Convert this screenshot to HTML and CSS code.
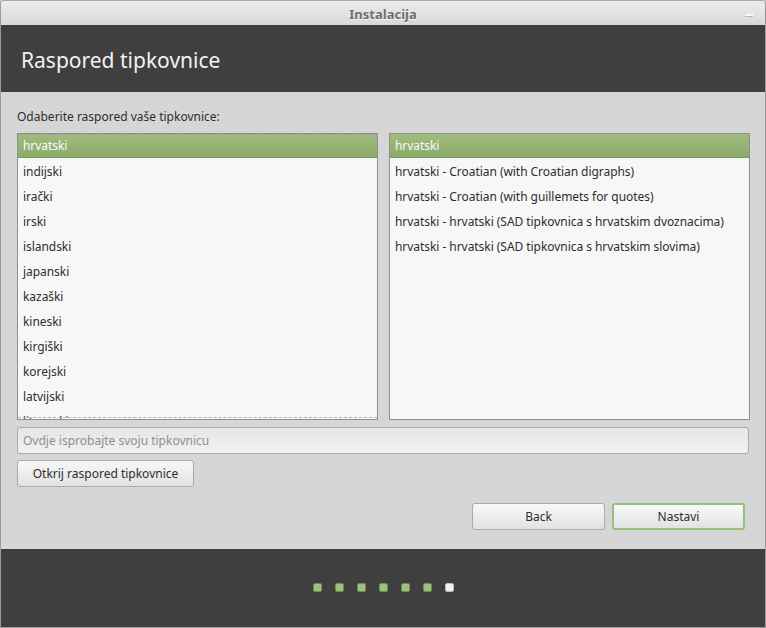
FILE: index.html
```html
<!DOCTYPE html>
<html lang="hr">
<head>
<meta charset="utf-8">
<link rel="stylesheet" href="styles.css">
</head>
<body>
<div class="window">
  <div class="titlebar">
    <span class="title">Instalacija</span>
    <span class="minimize"></span>
  </div>
  <div class="header"><h1>Raspored tipkovnice</h1></div>
  <div class="content">
    <div class="label">Odaberite raspored vaše tipkovnice:</div>
    <div class="lists">
      <div class="list">
        <div class="focus"></div>
        <div class="row selected">hrvatski</div>
        <div class="row">indijski</div>
        <div class="row">irački</div>
        <div class="row">irski</div>
        <div class="row">islandski</div>
        <div class="row">japanski</div>
        <div class="row">kazaški</div>
        <div class="row">kineski</div>
        <div class="row">kirgiški</div>
        <div class="row">korejski</div>
        <div class="row">latvijski</div>
        <div class="row">litvanski</div>
      </div>
      <div class="list">
        <div class="row selected">hrvatski</div>
        <div class="row">hrvatski - Croatian (with Croatian digraphs)</div>
        <div class="row">hrvatski - Croatian (with guillemets for quotes)</div>
        <div class="row">hrvatski - hrvatski (SAD tipkovnica s hrvatskim dvoznacima)</div>
        <div class="row">hrvatski - hrvatski (SAD tipkovnica s hrvatskim slovima)</div>
      </div>
    </div>
    <div class="input">Ovdje isprobajte svoju tipkovnicu</div>
    <div class="detect-row"><div class="btn detect">Otkrij raspored tipkovnice</div></div>
    <div class="actions">
      <div class="btn nav">Back</div>
      <div class="btn nav primary">Nastavi</div>
    </div>
  </div>
  <div class="footer">
    <div class="dots">
      <span class="dot"></span><span class="dot"></span><span class="dot"></span><span class="dot"></span><span class="dot"></span><span class="dot"></span><span class="dot current"></span>
    </div>
  </div>
</div>
</body>
</html>
```
FILE: styles.css
```css
* { box-sizing: border-box; }
html, body { margin: 0; padding: 0; }
body {
  width: 766px;
  height: 628px;
  font-family: "Noto Sans", "Open Sans", sans-serif;
  font-size: 12px;
  color: #2e2e2e;
  background: #cfcfcf;
}
.window {
  width: 766px;
  height: 628px;
  border: 1px solid #9a9a9a;
  border-top-color: #a8a8a8;
  border-radius: 4px 4px 0 0;
  display: flex;
  flex-direction: column;
  overflow: hidden;
}
.titlebar {
  height: 24px;
  flex: none;
  background: linear-gradient(#ececec, #d9d9d9);
  display: flex;
  align-items: center;
  justify-content: center;
  position: relative;
  padding-top: 2px;
}
.title {
  font-weight: bold;
  color: #6f6f6f;
  font-size: 13px;
  text-shadow: 0 1px 0 #f4f4f4;
}
.minimize {
  position: absolute;
  right: 12px;
  top: 13px;
  width: 8px;
  height: 3px;
  background: #f8f8f8;
  border: 1px solid #b8b8b8;
  border-width: 0 0 1px 0;
}
.header {
  height: 67px;
  flex: none;
  background: #3f3f3f;
  display: flex;
  align-items: center;
  padding-left: 20px;
}
.header h1 {
  margin: 0;
  font-weight: normal;
  font-size: 21px;
  color: #f2f2f2;
  padding-top: 2px;
}
.content {
  flex: 1;
  background: #d6d6d6;
  padding: 16px 16px 0 16px;
  display: flex;
  flex-direction: column;
}
.label {
  height: 17px;
  line-height: 17px;
  color: #2e2e2e;
  margin-bottom: 8px;
}
.lists {
  display: grid;
  grid-template-columns: 361px 361px;
  column-gap: 11px;
}
.list {
  height: 287px;
  background: #f7f7f7;
  border: 1px solid #8f8f8f;
  overflow: hidden;
  position: relative;
}
.focus {
  position: absolute;
  left: 0;
  right: 0;
  top: 0;
  bottom: 1px;
  border-top: 1px dashed #9d9d9d;
  border-bottom: 1px dashed #b4b4b4;
  pointer-events: none;
  z-index: 2;
}
.row {
  height: 25px;
  line-height: 25px;
  padding-left: 5px;
  color: #2e2e2e;
  white-space: nowrap;
  letter-spacing: -0.05px;
}
.row.selected {
  height: 24px;
  line-height: 24px;
  background: linear-gradient(#9fbe7e, #8cab6b);
  color: #fafafa;
  border-bottom: 1px solid #7c9a5d;
  margin-bottom: 1px;
}
.input {
  margin-top: 7px;
  height: 27px;
  line-height: 25px;
  border: 1px solid #a9a9a9;
  border-radius: 3px;
  background: linear-gradient(#e6e6e6, #f1f1f1);
  padding-left: 5px;
  color: #8f8f8f;
}
.detect-row {
  margin-top: 6px;
  display: flex;
}
.btn {
  height: 27px;
  line-height: 25px;
  border: 1px solid #aaaaaa;
  border-radius: 3px;
  background: linear-gradient(#f8f8f8, #e2e2e2);
  text-align: center;
  color: #2e2e2e;
}
.detect {
  width: 177px;
}
.actions {
  margin-top: 16px;
  display: flex;
  justify-content: flex-end;
  gap: 7px;
  padding-right: 4px;
}
.nav {
  width: 133px;
}
.primary {
  border: 2px solid #9bbd7c;
  line-height: 23px;
}
.footer {
  height: 78px;
  flex: none;
  background: #3f3f3f;
  display: flex;
  justify-content: center;
  padding-top: 34px;
}
.dots {
  display: flex;
  gap: 13px;
  height: 10px;
}
.dot {
  width: 9px;
  height: 9px;
  border-radius: 2px;
  background: #9cc37c;
  border: 1px solid #6f8e56;
}
.dot.current {
  background: #f2f2f2;
  border-color: #b8b8b8;
}
```
